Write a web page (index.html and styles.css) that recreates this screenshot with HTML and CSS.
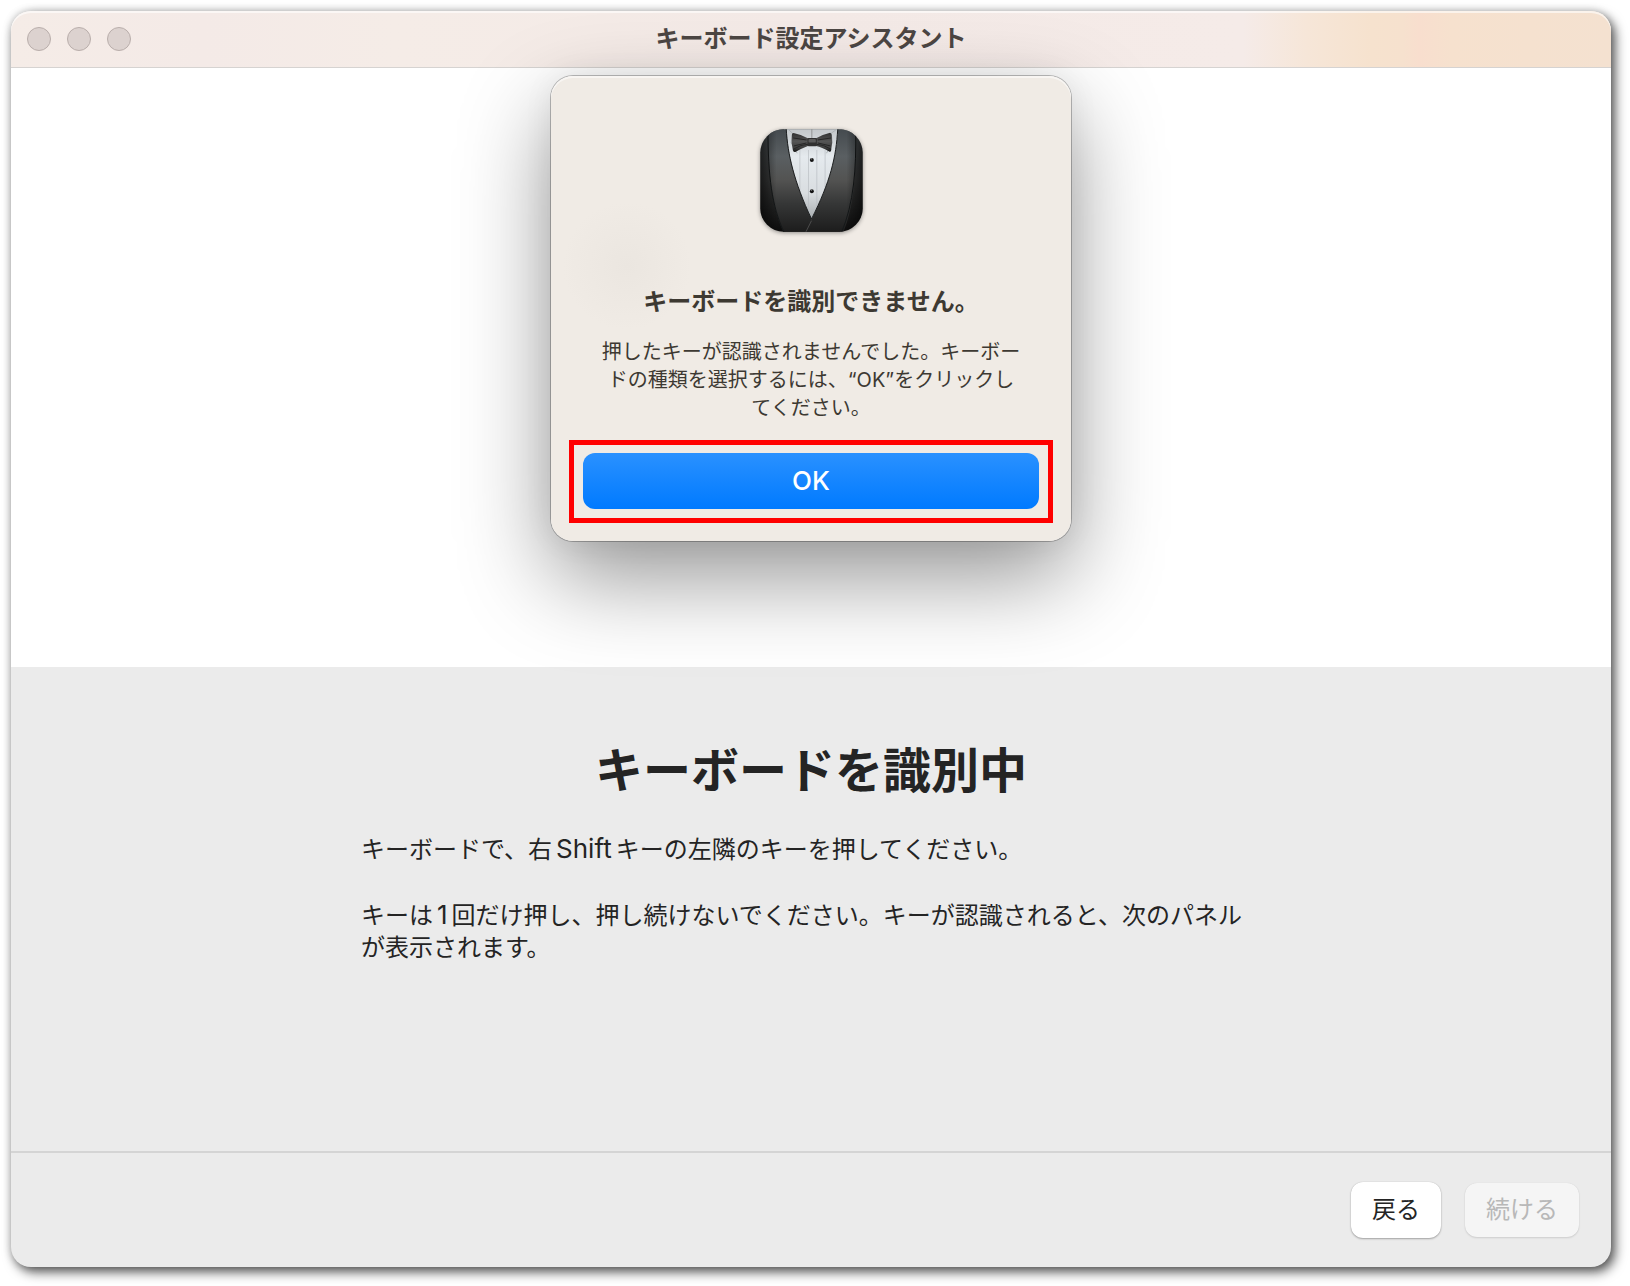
FILE: index.html
```
<!DOCTYPE html>
<html lang="ja">
<head>
    <meta charset="UTF-8">
    <meta name="viewport" content="width=device-width, initial-scale=1.0">
    <title>キーボード設定アシスタント</title>
    <link rel="stylesheet" href="styles.css">
</head>
<body>
    <div class="window">
        <header class="titlebar">
            <div class="lights">
                <span class="light"></span>
                <span class="light"></span>
                <span class="light"></span>
            </div>
            <div class="window-title">キーボード設定アシスタント</div>
        </header>

        <!-- 上部エリアとダイアログ -->
        <section class="stage">
            <div class="dialog" role="alertdialog" aria-labelledby="dialogTitle" aria-describedby="dialogText">
                <svg class="app-icon" viewBox="58 57 310 310" aria-hidden="true">
                    <defs>
                        <clipPath id="round"><rect x="59" y="58" width="308" height="308" rx="70"/></clipPath>
                        <linearGradient id="jacket" x1="0" y1="0" x2="0" y2="1">
                            <stop offset="0" stop-color="#484d50"/>
                            <stop offset="0.5" stop-color="#353636"/>
                            <stop offset="1" stop-color="#0b0b0b"/>
                        </linearGradient>
                        <linearGradient id="lapel" x1="0" y1="0" x2="0" y2="1">
                            <stop offset="0" stop-color="#43494d"/>
                            <stop offset="0.28" stop-color="#5a5f62"/>
                            <stop offset="0.5" stop-color="#535352"/>
                            <stop offset="0.72" stop-color="#363737"/>
                            <stop offset="1" stop-color="#1b1b1b"/>
                        </linearGradient>
                        <linearGradient id="shirt" x1="0" y1="0" x2="0" y2="1">
                            <stop offset="0" stop-color="#c3c7ca"/>
                            <stop offset="0.3" stop-color="#e5eaee"/>
                            <stop offset="0.7" stop-color="#d9dde0"/>
                            <stop offset="1" stop-color="#a4a9ac"/>
                        </linearGradient>
                        <linearGradient id="edge" x1="0" y1="0" x2="1" y2="0">
                            <stop offset="0" stop-color="#000" stop-opacity="0.55"/>
                            <stop offset="0.16" stop-color="#000" stop-opacity="0"/>
                            <stop offset="0.84" stop-color="#000" stop-opacity="0"/>
                            <stop offset="1" stop-color="#000" stop-opacity="0.55"/>
                        </linearGradient>
                        <linearGradient id="bow" x1="0" y1="0" x2="0" y2="1">
                            <stop offset="0" stop-color="#303030"/>
                            <stop offset="0.45" stop-color="#555"/>
                            <stop offset="0.8" stop-color="#3c3c3c"/>
                            <stop offset="1" stop-color="#111"/>
                        </linearGradient>
                    </defs>
                    <g clip-path="url(#round)">
                        <rect x="58" y="57" width="310" height="310" fill="url(#jacket)"/>
                        <path d="M130 57H300C296 160 268 230 213 334C165 245 137 170 130 57Z" fill="url(#shirt)"/>
                        <path d="M178 120V260M204 120V312M229 120V300M254 120V245" stroke="#b8bdc1" stroke-width="2"/>
                        <path d="M214 57V84" stroke="#777" stroke-width="2"/>
                        <path d="M142 57L156 70L152 98L170 130M290 57L272 70L276 98L258 130" fill="none" stroke="#aeb3b7" stroke-width="3"/>
                        <!-- 左右の襟 -->
                        <path d="M137 50C141 130 160 215 215 332L196 370H130C96 300 82 200 82 50Z" fill="url(#lapel)"/>
                        <path d="M293 50C288 140 270 215 213 330L194 370H308C342 290 348 180 346 50Z" fill="url(#lapel)"/>
                        <path d="M137 57C141 132 160 215 213 328M292 57C287 142 270 215 213 328" fill="none" stroke="#1b1d1e" stroke-width="3"/>
                        <path d="M213 333L196 367" stroke="#626262" stroke-width="2"/>
                        <path d="M82 57C82 200 94 290 130 367M346 57C348 180 340 280 304 367" fill="none" stroke="#151819" stroke-width="3"/>
                        <rect x="58" y="57" width="310" height="310" fill="url(#edge)"/>
                    </g>
                    <!-- 蝶ネクタイ -->
                    <path d="M154 75Q153 69 159 69Q184 74 202 85H227Q246 73 269 68Q274 70 274 76Q277 100 272 122Q271 127 266 125Q244 111 227 108H202Q184 115 164 126Q158 127 157 121Q151 98 154 75Z" fill="url(#bow)"/>
                    <path d="M158 118Q182 103 203 103M160 108L198 99M158 84L198 90M272 118Q248 103 228 103M270 108L232 99M272 84L232 90" fill="none" stroke="#262626" stroke-width="3"/>
                    <rect x="201" y="84" width="28" height="25" rx="4" fill="#303030"/>
                    <rect x="204" y="87" width="22" height="11" rx="3" fill="#5b5b5b"/>
                    <circle cx="214" cy="150" r="6" fill="#131313"/>
                    <circle cx="214" cy="244" r="6" fill="#131313"/>
                    <circle cx="213" cy="147" r="2" fill="#8a8a8a"/>
                    <circle cx="213" cy="241" r="2" fill="#8a8a8a"/>
                </svg>
                <h2 id="dialogTitle">キーボードを識別できません。</h2>
                <p id="dialogText" class="dialog-text">押したキーが認識されませんでした。キーボードの種類を選択するには、“OK”をクリックしてください。</p>
                <div class="highlight">
                    <button type="button" class="btn-primary">OK</button>
                </div>
            </div>
        </section>

        <main class="content">
            <h1>キーボードを識別中</h1>
            <div class="message">
                <p>キーボードで、右<span class="latin">Shift</span>キーの左隣のキーを押してください。</p>
                <p>キーは<span class="latin">1</span>回だけ押し、押し続けないでください。キーが認識されると、次のパネルが表示されます。</p>
            </div>
        </main>

        <footer class="footer">
            <button type="button" class="btn">戻る</button>
            <button type="button" class="btn" disabled>続ける</button>
        </footer>
    </div>
</body>
</html>
```
FILE: styles.css
```
* {
    margin: 0;
    padding: 0;
    box-sizing: border-box;
}

body {
    display: flex;
    min-height: 100vh;
    padding: 11px 19px 19px 11px;
    background-color: #fff;
    color: #242424;
    font-family: Inter, "Noto Sans CJK JP", sans-serif;
    font-size: 24px;
    line-height: 32px;
}

.window {
    flex: 1;
    display: flex;
    flex-direction: column;
    background-color: #ebebeb;
    border-radius: 20px;
    box-shadow: 4px 5px 12px rgba(0, 0, 0, 0.65), 0 0 8px rgba(0, 0, 0, 0.2);
}

/* タイトルバー */
.titlebar {
    display: grid;
    grid-template-columns: 1fr auto 1fr;
    align-items: center;
    height: 57px;
    padding: 0 16px;
    border-bottom: 1px solid #d6d3d1;
    border-radius: 20px 20px 0 0;
    background: linear-gradient(90deg, #f5ece7 0%, #f4eae7 12%, #f5ece7 24%, #f4eae7 50%, #f5ebe8 77%, #f6e6d8 81%, #f6e2ce 85%, #f6e1ce 87%, #f8dece 88%, #f6e1ce 90%, #f4e1d0 100%);
    box-shadow: inset 0 2px 0 rgba(255, 255, 255, 0.6);
}

.lights {
    display: flex;
    gap: 16px;
}

.light {
    width: 24px;
    height: 24px;
    border: 1px solid #b9aeab;
    border-radius: 50%;
    background-color: #dcd2cf;
}

.window-title {
    color: #4c4643;
    font-weight: 700;
}

/* ダイアログ */
.stage {
    display: flex;
    justify-content: center;
    align-items: flex-start;
    min-height: 599px;
    padding-top: 8px;
    background-color: #fff;
}

.dialog {
    position: relative;
    display: flex;
    flex-direction: column;
    align-items: center;
    width: 520px;
    padding: 53px 18px 18px;
    border-radius: 22px;
    background: radial-gradient(circle at 76px 190px, #ebe6e0 0, #f0ebe5 64px);
    color: #3d3932;
    text-align: center;
    box-shadow: inset 0 2px 0 rgba(255, 255, 255, 0.5), 0 0 0 1px rgba(0, 0, 0, 0.25), 0 36px 90px rgba(0, 0, 0, 0.42), 0 0 32px rgba(0, 0, 0, 0.06);
}

.app-icon {
    width: 103px;
    height: 103px;
    filter: drop-shadow(0 1px 2px rgba(0, 0, 0, 0.4));
}

.dialog h2 {
    margin-top: 54px;
    font-size: 24px;
    font-weight: 700;
}

.dialog-text {
    width: 424px;
    margin: 20px 0 18px;
    font-size: 20px;
    line-height: 28px;
}

/* OKボタンを囲む赤枠 */
.highlight {
    width: 100%;
    padding: 8px 9px 9px;
    border: 5px solid #f00;
}

.btn-primary {
    display: block;
    width: 100%;
    height: 56px;
    padding-bottom: 2px;
    border: none;
    border-radius: 12px;
    background: linear-gradient(#2a91ff, #007aff);
    color: #fff;
    font-family: inherit;
    font-size: 26px;
    font-weight: 500;
}

/* 説明文 */
.content {
    flex: 1;
    padding: 72px 32px 32px;
}

.content h1 {
    margin-bottom: 30px;
    font-size: 48px;
    font-weight: 700;
    line-height: 64px;
    text-align: center;
}

.message {
    max-width: 900px;
    margin: 0 auto;
}

.message p + p {
    margin-top: 33px;
}

.latin {
    margin: 0 4px;
    font-size: 26px;
}

/* フッター */
.footer {
    display: flex;
    justify-content: flex-end;
    align-items: center;
    gap: 24px;
    height: 116px;
    padding: 0 32px;
    border-top: 2px solid #d4d4d4;
}

.btn {
    height: 56px;
    padding: 0 21px 6px;
    border: none;
    border-radius: 12px;
    background-color: #fff;
    color: #242424;
    font-family: inherit;
    font-size: 24px;
    box-shadow: 0 1px 2px rgba(0, 0, 0, 0.3), 0 0 1px rgba(0, 0, 0, 0.2);
}

.btn:disabled {
    height: 54px;
    background-color: #f5f5f5;
    color: #b8b8b8;
    box-shadow: 0 1px 2px rgba(0, 0, 0, 0.12), 0 0 1px rgba(0, 0, 0, 0.1);
}
```
